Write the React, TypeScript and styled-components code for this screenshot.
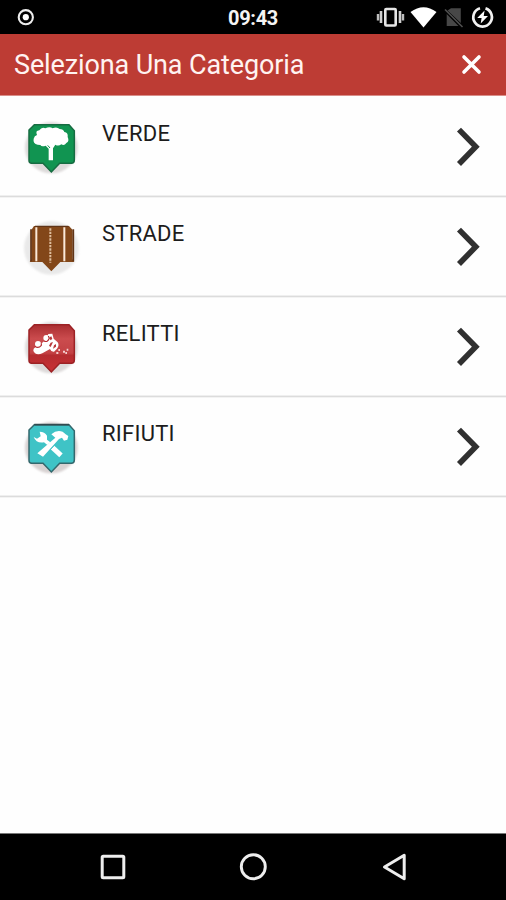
import React from 'react';
import styled, { createGlobalStyle } from 'styled-components';

const GlobalStyle = createGlobalStyle`
  * { box-sizing: border-box; }
  body { margin: 0; background: #fff; font-family: Roboto, sans-serif; }
`;

const Screen = styled.div`
  width: 506px;
  height: 900px;
  display: flex;
  flex-direction: column;
  background: #fefefe;
  overflow: hidden;
`;

const StatusBar = styled.div`
  height: 34px;
  flex: none;
  display: grid;
  grid-template-columns: 1fr auto 1fr;
  align-items: center;
  background: #000;
  padding: 0 10px 0 16px;
`;

const Clock = styled.time`
  color: #f4f4f4;
  font-size: 20px;
  font-weight: 700;
  line-height: 32px;
  letter-spacing: -0.35px;
  padding: 2px 6px 0 0;
`;

const StatusIcons = styled.div`
  display: flex;
  justify-content: flex-end;
`;

const Header = styled.header`
  height: 62px;
  flex: none;
  display: flex;
  align-items: center;
  justify-content: space-between;
  padding: 0 22px 0 14px;
  background: #bd3c34;
  border-bottom: 1px solid #d98e89;
`;

const Title = styled.h1`
  margin: 0;
  color: #fff3f1;
  font-size: 27px;
  font-weight: 400;
  line-height: 60px;
  letter-spacing: -0.12px;
`;

const CloseButton = styled.button`
  display: flex;
  padding: 0;
  border: 0;
  background: none;
`;

const List = styled.ul`
  margin: 0;
  padding: 0;
  list-style: none;
  flex: 1;
`;

const Row = styled.li`
  height: 100px;
  display: flex;
  align-items: flex-start;
  padding: 14px 24px 0 15px;
  box-shadow: 0 1px #dcdcdc, 0 2px #f3f3f3;
  border-bottom: 1px solid #efefef;
`;

const Label = styled.span`
  flex: 1;
  padding-left: 12px;
  color: #1c1c1c;
  font-size: 22px;
  line-height: 26px;
  margin-top: 11px;
  letter-spacing: 0.25px;
`;

const Chevron = styled.svg`
  width: 28px;
  height: 44px;
  margin-top: 15px;
  flex: none;
`;

const PinSvg = styled.svg`
  width: 75px;
  height: 75px;
  flex: none;
`;

const NavBar = styled.nav`
  height: 67px;
  flex: none;
  display: flex;
  align-items: center;
  justify-content: space-between;
  padding: 0 97px;
  background: #000;
  border-top: 1px solid #777;
`;

const PIN = 'M58 44 H162 L178 62 V150 Q178 160 169 160 H134 L109 186 L84 160 H50 Q42 160 42 151 V60 Z';

type PinProps = { fill: string; edge: string; halo?: string; children: React.ReactNode };

const Pin = ({ fill, edge, halo = '#dddada', children }: PinProps) => (
  <PinSvg viewBox="0 0 225 225">
    <defs>
      <filter id="soft" x="-20%" y="-20%" width="140%" height="140%">
        <feGaussianBlur stdDeviation="3" />
      </filter>
    </defs>
    <ellipse cx="109" cy="113" rx="79" ry="77" fill={halo} filter="url(#soft)" />
    <path d={PIN} fill={fill} stroke={edge} strokeWidth="4.5" />
    {children}
  </PinSvg>
);

const TreePin = () => (
  <Pin fill="#119451" edge="#176c42">
    <path
      fill="#fff"
      d="M68 104 Q53 101 56 86 Q58 77 66 75 Q60 62 73 61 Q80 50 91 55 Q104 48 113 55 Q125 49 134 57 Q145 57 148 66 Q160 68 158 81 Q164 94 154 99 Q148 108 139 103 Q130 110 121 104 L114 115 V151 H101 V116 L92 107 Q80 112 76 105 Z"
    />
    <path d="M98 106 L105 114" fill="none" stroke="#119451" strokeWidth="3" />
  </Pin>
);

const RoadPin = () => (
  <PinSvg viewBox="0 0 225 225">
    <ellipse cx="109" cy="114" rx="82" ry="80" fill="#e9e9e9" filter="url(#soft)" />
    <path
      d="M57 48 H162 L173 60 V148 L178 156 H136 L109 184 L82 156 H44 L49 148 V60 Z"
      fill="#834719"
    />
    <path d="M60 49 H160" stroke="#5f3417" strokeWidth="4" />
    <path d="M48 58 V154 M175 58 V154" stroke="#603417" strokeWidth="5" />
    <path d="M64 52 V154 M148 52 V154" stroke="#fbe9d9" strokeWidth="6" />
    <path d="M106 55 V158" stroke="#ddbd9c" strokeWidth="6" strokeDasharray="7 3" />
  </PinSvg>
);

const WreckPin = () => (
  <Pin fill="url(#wreckRed)" edge="#9c2225">
    <defs>
      <linearGradient id="wreckRed" x1="0" y1="0" x2="0" y2="1">
        <stop offset="0" stopColor="#a92d30" />
        <stop offset=".3" stopColor="#cb4c4e" />
        <stop offset=".6" stopColor="#c34144" />
        <stop offset=".65" stopColor="#b52c30" />
        <stop offset="1" stopColor="#ca3034" />
      </linearGradient>
    </defs>
    <path
      fill="#fff"
      d="M55 123 Q54 115 61 112 L84 97 L94 87 L100 72 L112 71 L116 86 L128 97 Q134 106 126 116 L117 125 Q108 126 105 117 L82 130 Q69 136 60 130 Z"
    />
    <circle cx="69" cy="102" r="9" fill="#fff" />
    <circle cx="94" cy="84" r="9" fill="#fff" />
    <path
      fill="none"
      stroke="#b4292e"
      strokeWidth="3.5"
      d="M60 109 Q70 117 79 106 L79 100 M87 93 Q98 98 103 85 L100 78"
    />
    <path fill="#b8373a" d="M104 82 L109 79 L112 87 L106 91 Z M102 107 L107 98 L114 96 L107 111 Z M114 116 L117 106 L123 102 L123 110 Z" />
    <path
      fill="#f4cfcf"
      d="M130 117h5v6h-5z M124 126h6v6h-6z M144 122h6v6h-6z M155 116h5v6h-5z M151 126h5v6h-5z"
    />
  </Pin>
);

const ToolsPin = () => (
  <Pin fill="#3fc3c6" edge="#34686d" halo="#d8d2d2">
    <path d="M58 44 H162" stroke="#324b50" strokeWidth="5" />
    <path
      fill="#fff"
      d="M56 81 L66 86 L77 79 L74 65 Q89 65 96 77 L96 89 L106 97 L97 105 L87 97 Q64 101 56 81 Z"
    />
    <path d="M112 112 L138 136" stroke="#fff" strokeWidth="15" />
    <path
      fill="#fff"
      d="M109 73 Q125 58 143 65 L152 73 L160 78 L157 89 L147 92 L141 83 L132 87 L84 140 L67 130 L121 83 Z"
    />
    <path d="M104 121 L123 101" stroke="#3fc3c6" strokeWidth="3" />
  </Pin>
);

const categories = [
  { name: 'VERDE', icon: TreePin },
  { name: 'STRADE', icon: RoadPin },
  { name: 'RELITTI', icon: WreckPin },
  { name: 'RIFIUTI', icon: ToolsPin },
];

export default function App() {
  return (
    <>
      <GlobalStyle />
      <Screen>
        <StatusBar>
          <svg width="20" height="20" viewBox="0 0 20 20">
            <circle cx="9.8" cy="10.2" r="7.1" fill="none" stroke="#eee" strokeWidth="2.1" />
            <circle cx="9.8" cy="10.2" r="3.1" fill="#fff" />
          </svg>
          <Clock>09:43</Clock>
          <StatusIcons>
            <svg width="120" height="34" viewBox="0 0 120 34">
              <rect x="9.3" y="9" width="10.4" height="16.5" rx="1" fill="none" stroke="#e6e6e6" strokeWidth="2.6" />
              <path d="M5 11V23M24 11V23" stroke="#d0d0d0" strokeWidth="2.6" />
              <path d="M2 14V20.5M27 14V20.5" stroke="#bdbdbd" strokeWidth="2.4" />
              <path d="M34.5 12 Q47.5 2.5 60.5 12 L47.5 27.5 Z" fill="#fff" />
              <path d="M75 8.2 H84.8 V23 L71.5 10.5 Z M70.7 14 V26 H82.5 Z" fill="#474747" />
              <path d="M69 9.5 L86.5 27" stroke="#505050" strokeWidth="1.6" />
              <path d="M109.5 8.4 A9.3 9.3 0 1 1 104 8.3" fill="none" stroke="#f1f1f1" strokeWidth="2.7" />
              <path d="M108.6 10.5 L101.2 18 H105.6 L104.7 23.5 L112 16 H107.7 Z" fill="#fff" />
            </svg>
          </StatusIcons>
        </StatusBar>
        <Header>
          <Title>Seleziona Una Categoria</Title>
          <CloseButton aria-label="Chiudi">
            <svg width="25" height="25" viewBox="0 0 25 25">
              <path d="M5 5 L20 20 M20 5 L5 20" stroke="#fff" strokeWidth="3.6" strokeLinecap="round" />
            </svg>
          </CloseButton>
        </Header>
        <List>
          {categories.map(({ name, icon: Icon }) => (
            <Row key={name}>
              <Icon />
              <Label>{name}</Label>
              <Chevron viewBox="0 0 28 44">
                <path
                  d="M5 4.6 L21.8 21.8 L5 39"
                  fill="none"
                  stroke="#303030"
                  strokeWidth="5.6"
                />
              </Chevron>
            </Row>
          ))}
        </List>
        <NavBar>
          <svg width="32" height="32" viewBox="0 0 32 32">
            <rect x="5.2" y="5.2" width="21.6" height="21.6" rx="1" fill="none" stroke="#eee" strokeWidth="3" />
          </svg>
          <svg width="32" height="32" viewBox="0 0 32 32">
            <circle cx="16.3" cy="15.8" r="12" fill="none" stroke="#eee" strokeWidth="2.9" />
          </svg>
          <svg width="32" height="32" viewBox="0 0 32 32">
            <path d="M27.2 4.3 V27.7 L7.5 16 Z" fill="none" stroke="#eee" strokeWidth="3" strokeLinejoin="round" />
          </svg>
        </NavBar>
      </Screen>
    </>
  );
}
